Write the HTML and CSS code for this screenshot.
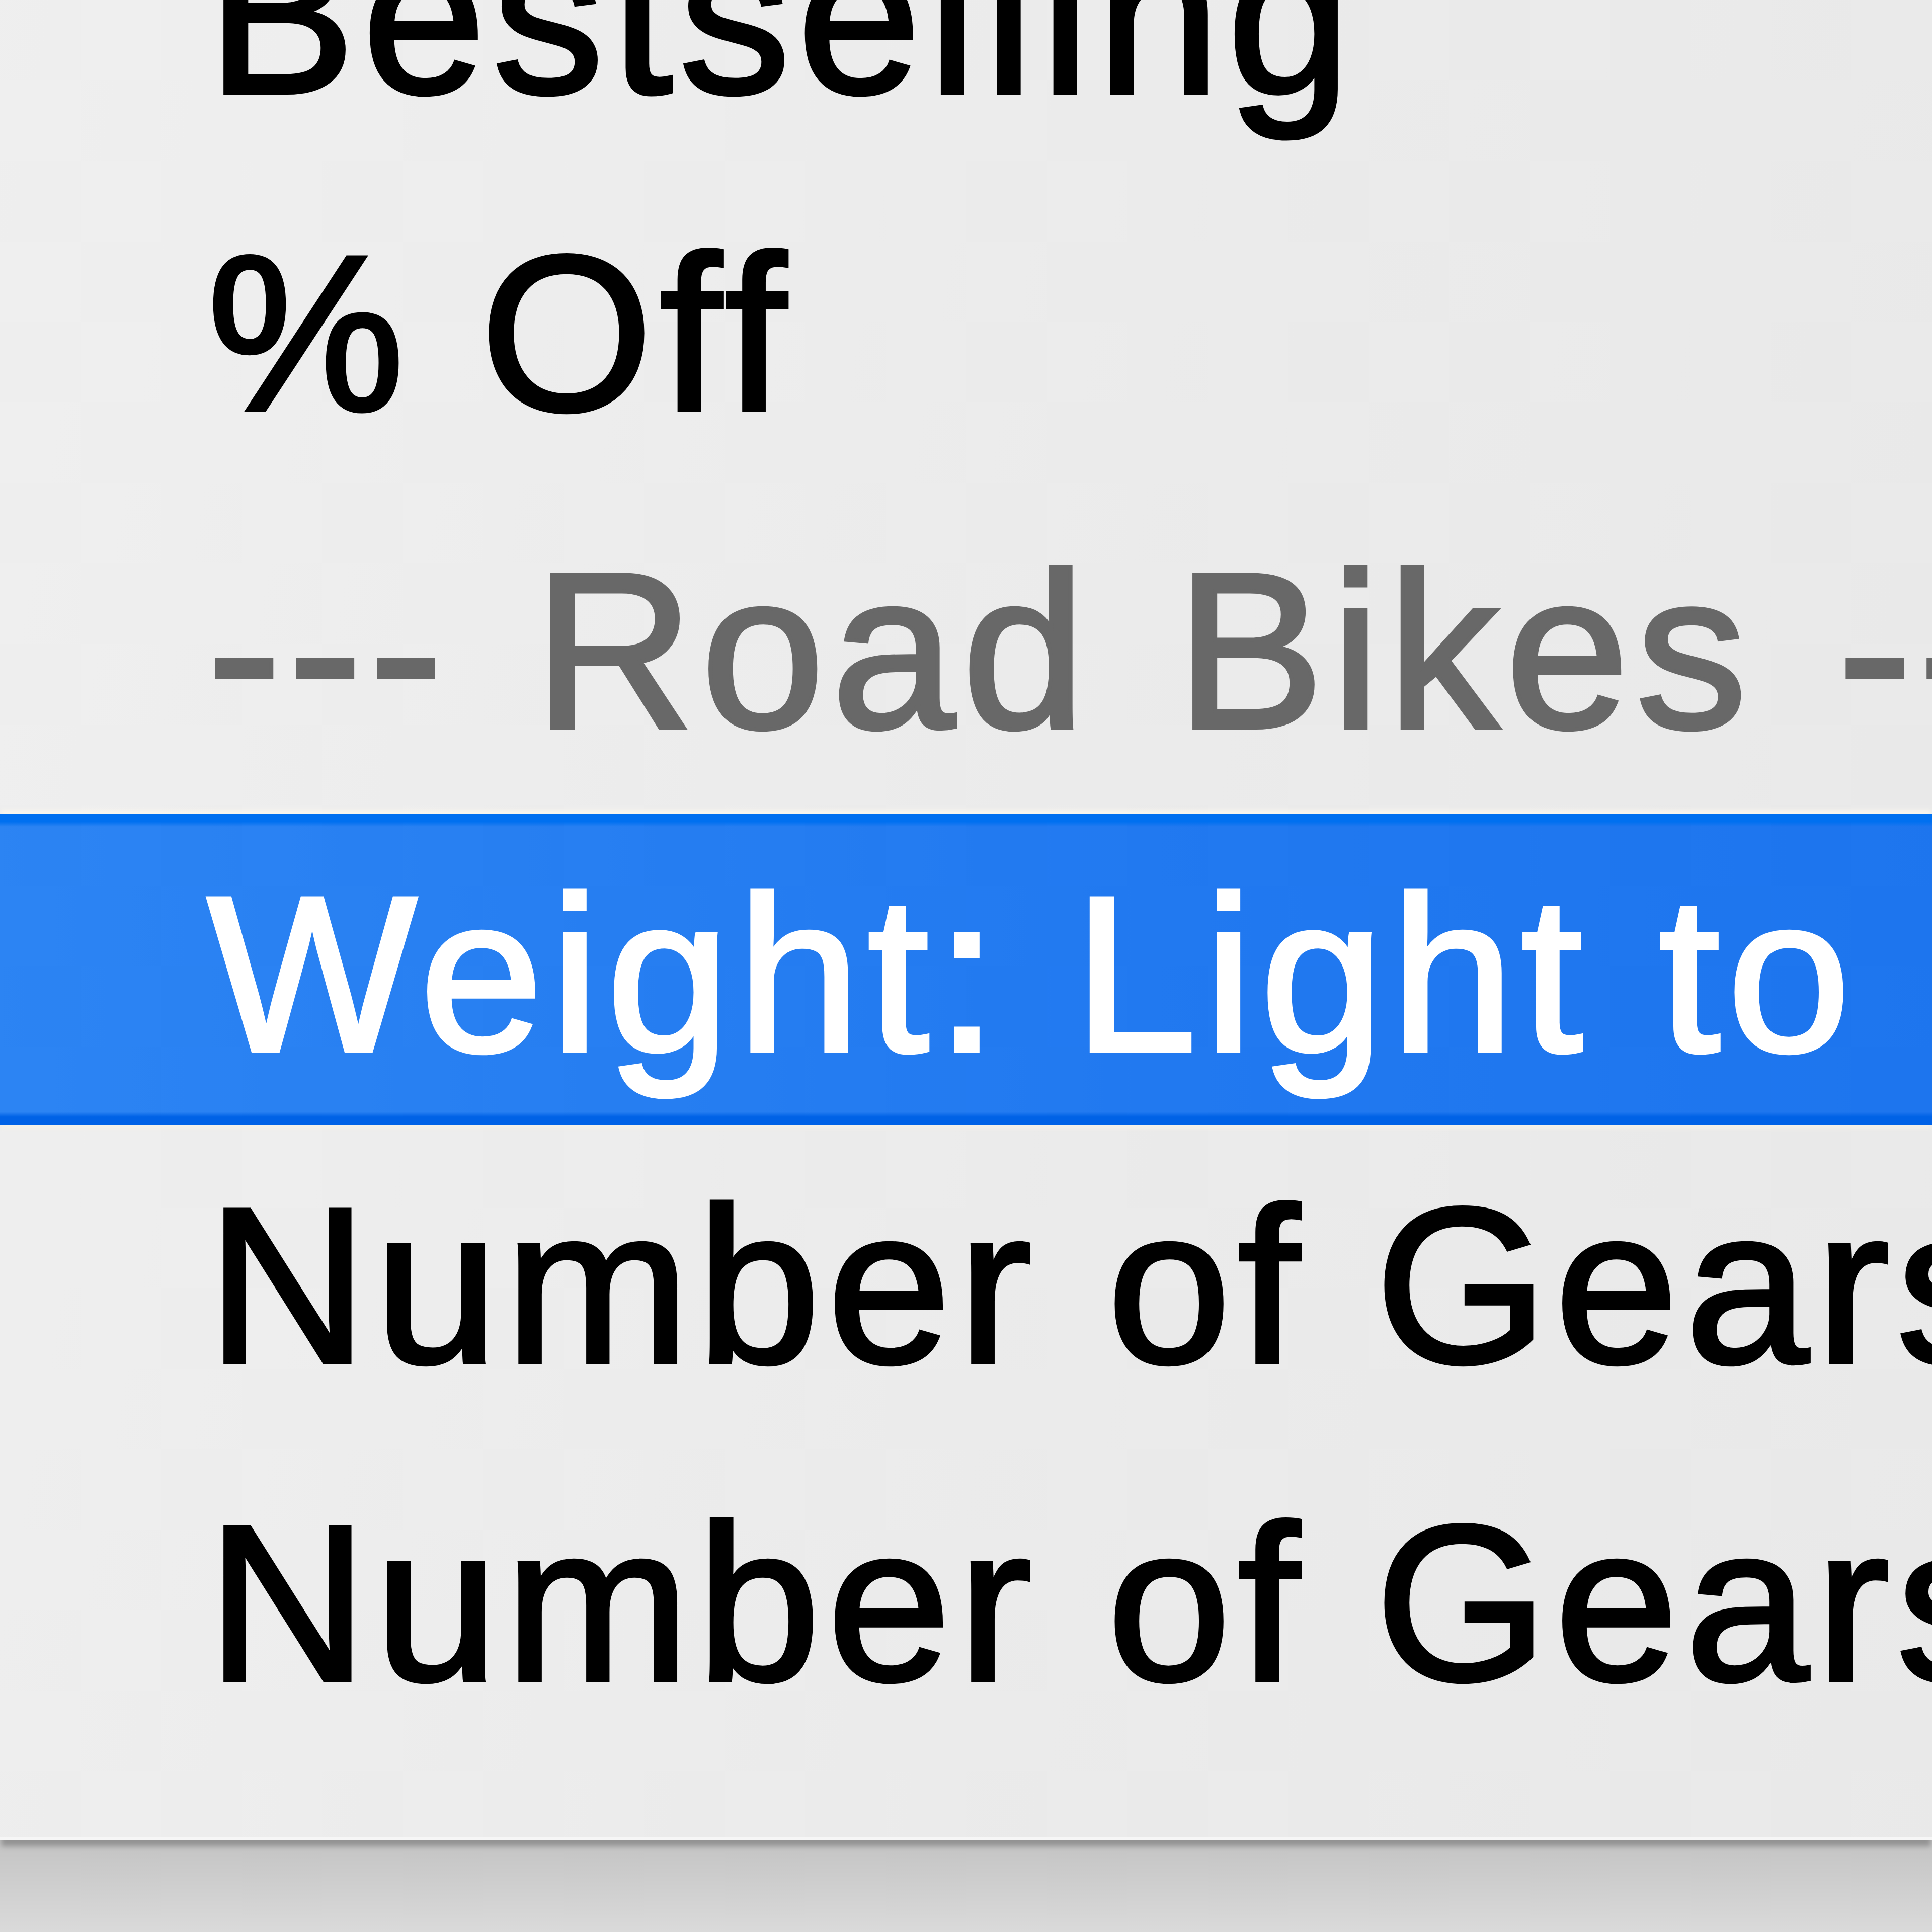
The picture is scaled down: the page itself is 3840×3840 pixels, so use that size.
FILE: index.html
```html
<!DOCTYPE html>
<html lang="en">
<head>
<meta charset="utf-8">
<title>Sort menu</title>
<link rel="stylesheet" href="styles.css">
</head>
<body>
<div class="desk">
  <ul class="menu">
    <li class="item">Bestselling</li>
    <li class="item">% Off</li>
    <li class="item header">--- Road Bikes ---</li>
    <li class="item selected">Weight: Light to Heavy</li>
    <li class="item">Number of Gears: Low to High</li>
    <li class="item">Number of Gears: High to Low</li>
  </ul>
</div>
</body>
</html>
```

FILE: styles.css
```css
html, body {
  margin: 0;
  padding: 0;
}
body {
  width: 3840px;
  height: 3840px;
  overflow: hidden;
  background: linear-gradient(to bottom, #c6c6c6 3680px, #dadada 3840px);
}
.desk {
  width: 3840px;
  height: 3840px;
  overflow: hidden;
}
.menu {
  list-style: none;
  margin: -284px 0 0 0;
  padding: 0 0 150px 0;
  background: linear-gradient(100deg, #efefef 0%, #ebebeb 55%, #e9e9e9 100%);
  border-bottom: 6px solid #f6f6f6;
  box-shadow: 0 14px 10px -2px rgba(0, 0, 0, 0.26);
  font-family: "Liberation Sans", Arial, Helvetica, sans-serif;
  font-size: 441px;
  letter-spacing: 14px;
  color: #000;
  -webkit-text-stroke: 8px currentColor;
}
.item {
  height: 631px;
  line-height: 631px;
  padding-left: 412px;
  white-space: nowrap;
  overflow: hidden;
}
.header {
  color: #686868;
  word-spacing: 30px;
}
.selected {
  height: 599px;
  line-height: 599px;
  padding-top: 20px;
  margin: 8px 0 4px 0;
  color: #fff;
  background:
    linear-gradient(to bottom,
      rgba(0, 112, 240, 1) 0px,
      rgba(0, 112, 240, 1) 16px,
      rgba(0, 112, 240, 0) 26px,
      rgba(0, 98, 230, 0) calc(100% - 26px),
      rgba(0, 98, 230, 1) calc(100% - 16px),
      rgba(0, 98, 230, 1) 100%),
    linear-gradient(to right, #2c84f3 0%, #2179f0 60%, #1d75ee 100%);
  box-shadow: 0 -10px 8px -3px #f8f6ee, 0 10px 8px -3px #f3f1e9;
}
```
